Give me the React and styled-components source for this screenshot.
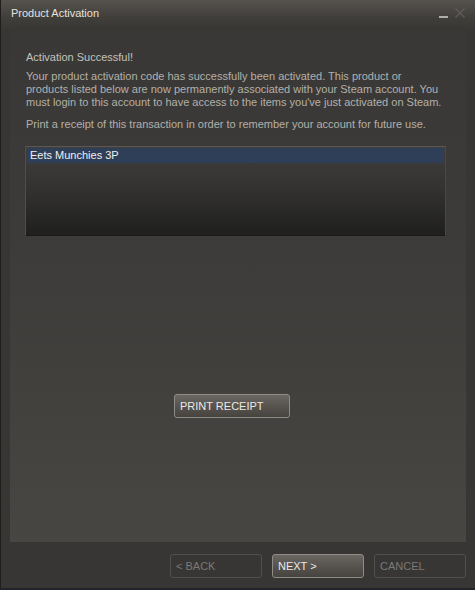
import React from "react";
import styled, { createGlobalStyle } from "styled-components";

const GlobalStyle = createGlobalStyle`
  html, body {
    margin: 0;
    padding: 0;
    background: #1c2533;
  }
  * {
    box-sizing: border-box;
  }
`;

function App() {
  return (
    <>
      <GlobalStyle />
      <Window>
        <TitleBar>
          <Title>Product Activation</Title>
          <WindowControls>
            <Minimize />
            <CloseIcon viewBox="0 0 10 10">
              <path d="M0.5 0.5 L9.5 9.5 M9.5 0.5 L0.5 9.5" stroke="#5f5d5a" strokeWidth="1.3" />
            </CloseIcon>
          </WindowControls>
        </TitleBar>

        <Panel>
          <Heading>Activation Successful!</Heading>
          <Paragraph>
            Your product activation code has successfully been activated. This product or
            products listed below are now permanently associated with your Steam account. You
            must login to this account to have access to the items you've just activated on Steam.
          </Paragraph>
          <Paragraph>
            Print a receipt of this transaction in order to remember your account for future use.
          </Paragraph>

          <ProductList>
            <ProductRow selected>Eets Munchies 3P</ProductRow>
          </ProductList>

          <PrintArea>
            <Button primary wide>PRINT RECEIPT</Button>
          </PrintArea>
        </Panel>

        <Footer>
          <Button>&lt; BACK</Button>
          <Button primary>NEXT &gt;</Button>
          <Button>CANCEL</Button>
        </Footer>
      </Window>
    </>
  );
}

export default App;

const Window = styled.div`
  width: 475px;
  height: 589px;
  display: flex;
  flex-direction: column;
  background: #383634;
  border-left: 1px solid #1f1e1d;
  border-bottom: 1px solid #242321;
  font-family: "Liberation Sans", Arial, sans-serif;
`;

const TitleBar = styled.div`
  height: 30px;
  display: flex;
  align-items: flex-start;
  justify-content: space-between;
  padding: 6px 10px 0 10px;
  background: linear-gradient(to bottom, #55524e 0%, #403e3b 60%, #393735 100%);
`;

const Title = styled.div`
  font-size: 11px;
  line-height: 14px;
  color: #e4e2de;
`;

const WindowControls = styled.div`
  display: flex;
  align-items: flex-start;
  gap: 7px;
  padding-top: 2px;
`;

const Minimize = styled.div`
  width: 9px;
  height: 2px;
  margin-top: 8px;
  background: #b1aea9;
`;

const CloseIcon = styled.svg`
  width: 10px;
  height: 10px;
`;

const Panel = styled.div`
  flex: 1;
  margin: 0 9px 0 9px;
  display: flex;
  flex-direction: column;
  padding: 20px 20px 0 16px;
  background: linear-gradient(to bottom, #393836 0%, #3c3b39 40%, #474643 100%);
`;

const Heading = styled.div`
  font-size: 11px;
  line-height: 14px;
  color: #c4c1bb;
  margin-bottom: 6px;
`;

const Paragraph = styled.p`
  margin: 0 0 9px;
  font-size: 11px;
  line-height: 13px;
  color: #b3b0aa;
`;

const ProductList = styled.div`
  margin: 6px 0 0 -1px;
  height: 90px;
  padding: 1px 1px 0 1px;
  border-top: 1px solid #5a5855;
  border-left: 1px solid #504e4b;
  border-right: 1px solid #4a4845;
  border-bottom: 1px solid #1a1a19;
  background: linear-gradient(to bottom, #3f3e3c 0%, #343331 45%, #1f1f1e 100%);
`;

const ProductRow = styled.div`
  height: 15px;
  padding-left: 3px;
  font-size: 11px;
  line-height: 15px;
  color: #f0f0f0;
  background: ${(p) => (p.selected ? "#2f3f57" : "transparent")};
`;

const PrintArea = styled.div`
  display: flex;
  justify-content: center;
  padding-top: 158px;
  margin-right: 8px;
`;

const Button = styled.button`
  width: ${(p) => (p.wide ? "116px" : "92px")};
  height: 24px;
  padding: 0 0 0 5px;
  text-align: left;
  font-family: "Liberation Sans", Arial, sans-serif;
  font-size: 11px;
  border-radius: 3px;
  cursor: pointer;
  color: ${(p) => (p.primary ? "#ebe9e5" : "#7b7975")};
  border: 1px solid ${(p) => (p.primary ? "#8f8b85" : "#51504d")};
  background: ${(p) =>
    p.primary
      ? "linear-gradient(to bottom, #6a6661 0%, #57534f 50%, #47443f 100%)"
      : "transparent"};
`;

const Footer = styled.div`
  height: 46px;
  display: flex;
  justify-content: flex-end;
  gap: 10px;
  padding: 12px 9px 0 0;
`;
